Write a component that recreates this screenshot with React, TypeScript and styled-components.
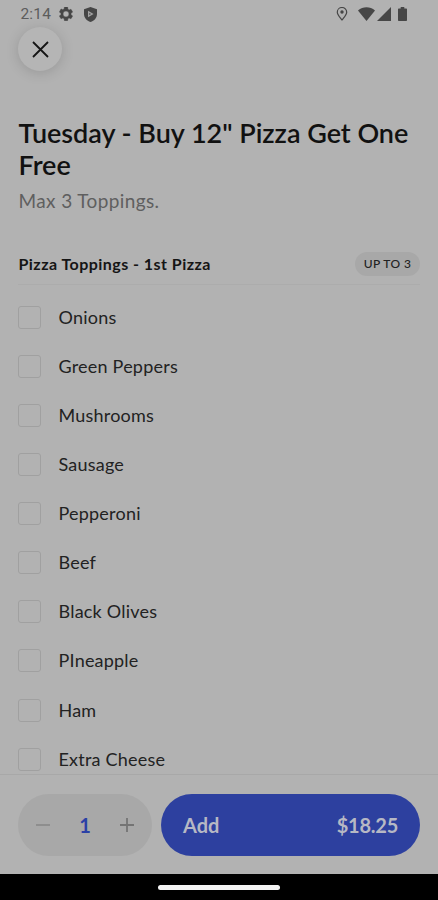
import React from "react";
import styled, { createGlobalStyle } from "styled-components";

const GlobalStyle = createGlobalStyle`
  * { box-sizing: border-box; }
  body { margin: 0; background: #b2b2b2; }
`;

const Screen = styled.div`
  width: 438px;
  height: 900px;
  display: flex;
  flex-direction: column;
  overflow: hidden;
  background: #b2b2b2;
  color: #151515;
  font-family: Lato, "Liberation Sans", sans-serif;
`;

const StatusBar = styled.header`
  height: 28px;
  flex: none;
  display: flex;
  align-items: center;
  padding: 0 31px 0 20.5px;
  color: #464646;
`;

const Clock = styled.span`
  width: 38.5px;
  font: 400 15.5px/28px Roboto, sans-serif;
  letter-spacing: 0.15px;
  color: #5c5c5c;
`;

const StatusIcon = styled.svg<{ $gap?: number }>`
  flex: none;
  display: block;
  margin-left: ${(p) => p.$gap ?? 0}px;
`;

const Spacer = styled.div`
  flex: 1;
`;

const CloseButton = styled.button`
  flex: none;
  width: 44px;
  height: 44px;
  margin: -1px 0 0 18px;
  padding: 0;
  border: 0;
  border-radius: 50%;
  background: #b5b5b5;
  box-shadow: 0 2px 13px rgba(0, 0, 0, 0.15);
  display: grid;
  place-items: center;
  color: #151515;
`;

const Content = styled.main`
  flex: 1;
  min-height: 0;
  overflow: hidden;
  padding: 46px 18px 0;
`;

const Title = styled.h1`
  margin: 0;
  padding-left: 0.5px;
  font-size: 27px;
  line-height: 32px;
  font-weight: 600;
  letter-spacing: -0.02px;
  color: #111;
`;

const Description = styled.p`
  margin: 8px 0 0;
  padding-left: 0.5px;
  font-size: 19px;
  line-height: 24px;
  letter-spacing: 0.38px;
  color: #5f5f5f;
`;

const GroupHeader = styled.div`
  height: 43px;
  margin-top: 29px;
  border-bottom: 1px solid #acacac;
  display: flex;
  align-items: center;
  justify-content: space-between;
`;

const GroupTitle = styled.h2`
  margin: 0;
  padding: 2px 0 0 0.5px;
  font-size: 16px;
  line-height: 24px;
  font-weight: 700;
  letter-spacing: 0.46px;
`;

const LimitBadge = styled.span`
  width: 65px;
  height: 24px;
  margin-top: 2px;
  border-radius: 12px;
  background: #a8a8a8;
  font-size: 12px;
  line-height: 24px;
  font-weight: 500;
  letter-spacing: 0.4px;
  text-align: center;
  color: #222;
`;

const OptionList = styled.div`
  padding-top: 8px;
`;

const Option = styled.label`
  height: 49.07px;
  display: flex;
  align-items: center;
  gap: 17.5px;
  font-size: 18px;
  line-height: 24px;
  letter-spacing: 0.21px;
  color: #222;
`;

const OptionName = styled.span`
  padding-bottom: 1px;
`;

const Checkbox = styled.input`
  appearance: none;
  flex: none;
  width: 23px;
  height: 23px;
  margin: 0;
  border: 1px solid #a0a0a0;
  border-radius: 3px;
`;

const Footer = styled.footer`
  flex: none;
  height: 100px;
  padding: 19px 18px 0;
  border-top: 1px solid #a8a8a8;
  display: flex;
  gap: 9px;
`;

const Stepper = styled.div`
  width: 134px;
  height: 62px;
  padding: 0 17px;
  border-radius: 31px;
  background: #a8a8a8;
  display: flex;
  align-items: center;
  justify-content: space-between;
`;

const StepButton = styled.button<{ $muted?: boolean }>`
  width: 16px;
  height: 16px;
  padding: 0;
  border: 0;
  background: none;
  display: grid;
  place-items: center;
  color: ${(p) => (p.$muted ? "#8c8c8c" : "#747474")};
`;

const Quantity = styled.span`
  font-size: 20px;
  line-height: 24px;
  font-weight: 700;
  color: #2b41a6;
`;

const AddButton = styled.button`
  flex: 1;
  height: 62px;
  padding: 0 22px;
  border: 0;
  border-radius: 31px;
  background: #2d409f;
  display: flex;
  align-items: center;
  justify-content: space-between;
  font: 700 20px/24px Lato, sans-serif;
  color: #b6b8c4;
`;

const Price = styled.span`
  letter-spacing: -0.25px;
`;

const NavigationBar = styled.div`
  flex: none;
  height: 26px;
  background: #000;
  display: flex;
  justify-content: center;
  padding-top: 10.5px;
`;

const HomeHandle = styled.div`
  width: 122px;
  height: 5px;
  border-radius: 3px;
  background: #f4f4f4;
`;

const toppings = [
  "Onions",
  "Green Peppers",
  "Mushrooms",
  "Sausage",
  "Pepperoni",
  "Beef",
  "Black Olives",
  "PIneapple",
  "Ham",
  "Extra Cheese",
];

const GearIcon = () => (
  <StatusIcon width="14" height="14" viewBox="2 2 20 20" fill="currentColor" stroke="currentColor" strokeWidth="0.6">
    <path
      fillRule="evenodd"
      d="M19.14 12.94c.04-.3.06-.61.06-.94s-.02-.64-.07-.94l2.03-1.58c.18-.14.23-.41.12-.61l-1.92-3.32c-.12-.22-.37-.29-.59-.22l-2.39.96c-.5-.38-1.03-.7-1.62-.94l-.36-2.54A.48.48 0 0 0 13.92 2h-3.84c-.24 0-.43.17-.47.41l-.36 2.54c-.59.24-1.13.57-1.62.94l-2.39-.96c-.22-.08-.47 0-.59.22L2.74 8.87c-.12.21-.08.47.12.61l2.03 1.58c-.05.3-.09.63-.09.94s.02.64.07.94l-2.03 1.58c-.18.14-.23.41-.12.61l1.92 3.32c.12.22.37.29.59.22l2.39-.96c.5.38 1.03.7 1.62.94l.36 2.54c.05.24.24.41.48.41h3.84c.24 0 .44-.17.47-.41l.36-2.54c.59-.24 1.13-.56 1.62-.94l2.39.96c.22.08.47 0 .59-.22l1.92-3.32c.12-.22.07-.47-.12-.61zM12 16.2a4.2 4.2 0 1 1 0-8.4 4.2 4.2 0 0 1 0 8.4z"
    />
  </StatusIcon>
);

const ShieldIcon = () => (
  <StatusIcon $gap={11} width="13" height="15" viewBox="0 0 13 15">
    <path fill="currentColor" d="M6.5 0 0 2.3v4.6c0 3.7 2.7 6.8 6.5 8.1 3.8-1.3 6.5-4.4 6.5-8.1V2.3z" />
    <path fill="#a2a2a2" d="M4 3.8 9.6 7 4 10.2z" />
    <circle cx="5.8" cy="7" r="0.8" fill="currentColor" />
  </StatusIcon>
);

const PinIcon = () => (
  <StatusIcon width="12" height="14" viewBox="0 0 12 14" fill="none">
    <path stroke="currentColor" strokeWidth="1.2" d="M6 13C3.5 9.8 1.3 7.6 1.3 5.2a4.7 4.7 0 0 1 9.4 0C10.7 7.6 8.5 9.8 6 13z" />
    <circle cx="6" cy="5" r="1.7" fill="currentColor" />
  </StatusIcon>
);

const WifiIcon = () => (
  <StatusIcon $gap={10} width="17" height="14" viewBox="0 0 17 14" fill="currentColor">
    <path d="M0 3.5C5-.9 12-.9 17 3.5L8.5 14z" />
  </StatusIcon>
);

const SignalIcon = () => (
  <StatusIcon $gap={2} width="14" height="14" viewBox="0 0 14 14" fill="currentColor">
    <path d="M14 0v14H0z" />
  </StatusIcon>
);

const BatteryIcon = () => (
  <StatusIcon $gap={7} width="9" height="14" viewBox="0 0 9 14" fill="currentColor">
    <path d="M2.7 0h3.6v1.5H8c.6 0 1 .4 1 1V13c0 .6-.4 1-1 1H1c-.6 0-1-.4-1-1V2.5c0-.6.4-1 1-1h1.7z" />
  </StatusIcon>
);

export default function App() {
  return (
    <Screen>
      <GlobalStyle />
      <StatusBar>
        <Clock>2:14</Clock>
        <GearIcon />
        <ShieldIcon />
        <Spacer />
        <PinIcon />
        <WifiIcon />
        <SignalIcon />
        <BatteryIcon />
      </StatusBar>
      <CloseButton aria-label="Close">
        <svg width="17" height="17" viewBox="0 0 17 17" fill="none" stroke="currentColor" strokeWidth="1.8">
          <path d="M1 1l15 15M16 1 1 16" />
        </svg>
      </CloseButton>
      <Content>
        <Title>Tuesday - Buy 12" Pizza Get One Free</Title>
        <Description>Max 3 Toppings.</Description>
        <GroupHeader>
          <GroupTitle>Pizza Toppings - 1st Pizza</GroupTitle>
          <LimitBadge>UP TO 3</LimitBadge>
        </GroupHeader>
        <OptionList>
          {toppings.map((name) => (
            <Option key={name}>
              <Checkbox type="checkbox" />
              <OptionName>{name}</OptionName>
            </Option>
          ))}
        </OptionList>
      </Content>
      <Footer>
        <Stepper>
          <StepButton $muted aria-label="Decrease quantity">
            <svg width="14" height="14" viewBox="0 0 14 14" stroke="currentColor" strokeWidth="1.8">
              <path d="M0 7h14" />
            </svg>
          </StepButton>
          <Quantity>1</Quantity>
          <StepButton aria-label="Increase quantity">
            <svg width="14" height="14" viewBox="0 0 14 14" stroke="currentColor" strokeWidth="1.8">
              <path d="M0 7h14M7 0v14" />
            </svg>
          </StepButton>
        </Stepper>
        <AddButton>
          <span>Add</span>
          <Price>$18.25</Price>
        </AddButton>
      </Footer>
      <NavigationBar>
        <HomeHandle />
      </NavigationBar>
    </Screen>
  );
}
